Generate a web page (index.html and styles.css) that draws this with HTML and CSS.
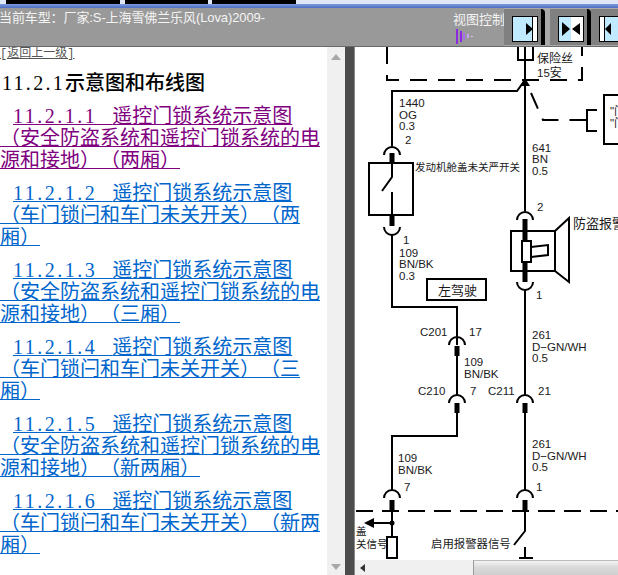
FILE: index.html
```html
<!DOCTYPE html>
<html lang="zh-CN">
<head>
  <meta charset="UTF-8">
  <title>遥控门锁系统示意图</title>
  <link rel="stylesheet" href="styles.css">
</head>
<body>
  <div class="strip">
    <span class="tab tab-a"></span>
    <span class="tab tab-b"></span>
    <span class="tab tab-c"></span>
  </div>
  <div class="titlebar"></div>

  <header class="toolbar">
    <div class="car">当前车型：厂家:S-上海雪佛兰乐风(Lova)2009-</div>
    <div class="view">
      <div class="view-label">视图控制</div>
      <svg class="view-icon" width="18" height="15" viewBox="0 0 18 15">
        <rect x="0" y="0" width="2" height="15" fill="#8a2be2"/>
        <rect x="4" y="2" width="2" height="11" fill="#8a2be2"/>
        <rect x="7" y="4" width="2" height="7" fill="#a66bf0"/>
        <rect x="11" y="5" width="2" height="4" fill="#c4a0f5"/>
        <rect x="15" y="7" width="2" height="1" fill="#d8c4f8"/>
      </svg>
    </div>
    <div class="btn">
      <div class="btn-face">
        <svg width="24" height="24" viewBox="0 0 24 24">
          <rect width="24" height="24" fill="#bfeaff"/>
          <rect x="20" width="4" height="24" fill="#fff"/>
          <path d="M13 6 L20 12 L13 18 Z" fill="#000"/>
          <rect x="19" width="1" height="24" fill="#000"/>
        </svg>
      </div>
    </div>
    <div class="btn">
      <div class="btn-face">
        <svg width="24" height="24" viewBox="0 0 24 24">
          <rect width="12" height="24" fill="#bfeaff"/>
          <rect x="12" width="12" height="24" fill="#fff"/>
          <path d="M3 5 L11 12 L3 19 Z" fill="#000"/>
          <path d="M21 6 L13 12 L21 18 Z" fill="#000"/>
        </svg>
      </div>
    </div>
    <div class="btn btn-last">
      <div class="btn-face">
        <svg width="24" height="24" viewBox="0 0 24 24">
          <rect width="24" height="24" fill="#bfeaff"/>
          <rect width="4" height="24" fill="#fff"/>
          <rect x="4" width="1" height="24" fill="#000"/>
          <path d="M11 6 L5 12 L11 18 Z" fill="#000"/>
        </svg>
      </div>
    </div>
  </header>

  <div class="panes">
    <nav class="tree">
      <a class="back" href="#">[返回上一级]</a>
      <h1 class="tree-title"><span class="num">11.2.1</span>示意图和布线图</h1>
      <p class="item"><a class="seen" href="#"><span class="num">11.2.1.1&nbsp;&nbsp;</span>遥控门锁系统示意图（安全防盗系统和遥控门锁系统的电源和接地）（两厢）</a></p>
      <p class="item"><a href="#"><span class="num">11.2.1.2&nbsp;&nbsp;</span>遥控门锁系统示意图（车门锁闩和车门未关开关）（两厢）</a></p>
      <p class="item"><a href="#"><span class="num">11.2.1.3&nbsp;&nbsp;</span>遥控门锁系统示意图（安全防盗系统和遥控门锁系统的电源和接地）（三厢）</a></p>
      <p class="item"><a href="#"><span class="num">11.2.1.4&nbsp;&nbsp;</span>遥控门锁系统示意图（车门锁闩和车门未关开关）（三厢）</a></p>
      <p class="item"><a href="#"><span class="num">11.2.1.5&nbsp;&nbsp;</span>遥控门锁系统示意图（安全防盗系统和遥控门锁系统的电源和接地）（新两厢）</a></p>
      <p class="item"><a href="#"><span class="num">11.2.1.6&nbsp;&nbsp;</span>遥控门锁系统示意图（车门锁闩和车门未关开关）（新两厢）</a></p>
    </nav>

    <div class="vscroll">
      <svg width="12" height="8" viewBox="0 0 12 8"><path d="M6 1 L11 7 L1 7 Z" fill="#a8a8a8"/></svg>
      <svg width="12" height="8" viewBox="0 0 12 8"><path d="M1 1 L11 1 L6 7 Z" fill="#a8a8a8"/></svg>
    </div>
    <div class="divider"></div>

    <div class="viewer">
      <svg class="diagram" width="263" height="513" viewBox="355 47 263 513">
        <!-- fuse and dashed box -->
        <path class="wire" d="M518 47 V60 H533 V47"/>
        <path class="dash" d="M387 47 V80 H582 V47"/>
        <text class="cn" x="537" y="63" font-size="12">保险丝</text>
        <text class="lb" x="537" y="77">15<tspan class="cn" font-size="12">安</tspan></text>

        <!-- main feed -->
        <path class="wire" d="M525 47 V211"/>
        <path d="M525 78 L530 86 L520 86 Z" fill="#000"/>
        <path class="wire" d="M525 80 L517 91 H392 V146"/>
        <text class="lb" x="399" y="107">1440</text>
        <text class="lb" x="399" y="119">OG</text>
        <text class="lb" x="399" y="130">0.3</text>
        <text class="lb" x="405" y="144">2</text>
        <text class="lb" x="532" y="152">641</text>
        <text class="lb" x="532" y="163">BN</text>
        <text class="lb" x="532" y="175">0.5</text>
        <text class="lb" x="537" y="211">2</text>

        <!-- dashed control line -->
        <path class="dash" d="M531 93 L543 120 H586"/>
        <path class="wire" d="M597 110 H587 V131 H597"/>
        <rect class="wire" x="604" y="95" width="30" height="49"/>
        <text class="lb" x="610" y="115">"门</text>
        <text class="lb" x="610" y="127">"门</text>

        <!-- hood switch -->
        <path class="wire" d="M384 155 a8 8 0 0 1 16 0"/>
        <path class="stem" d="M392 153 V163"/>
        <rect class="wire" x="369" y="163" width="44" height="52"/>
        <path class="wire" d="M392 163 V177 L382 191"/>
        <path class="wire" d="M392 192 V215"/>
        <path class="stem" d="M392 215 V226"/>
        <path class="wire" d="M384 227 a8 8 0 0 0 16 0"/>
        <text class="cn" x="415" y="171" font-size="10.5">发动机舱盖未关严开关</text>
        <text class="lb" x="403" y="244">1</text>
        <path class="wire" d="M392 235 V307 H457 V345"/>
        <text class="lb" x="399" y="257">109</text>
        <text class="lb" x="399" y="268">BN/BK</text>
        <text class="lb" x="399" y="280">0.3</text>
        <rect class="wire" x="427" y="279" width="59" height="21"/>
        <text class="cn" x="438" y="295" font-size="13">左驾驶</text>

        <!-- C201 / C210 -->
        <path class="wire" d="M449 345 a8 8 0 0 1 16 0"/>
        <path class="stem" d="M457 346 V356"/>
        <text class="lb" x="420" y="336">C201</text>
        <text class="lb" x="469" y="336">17</text>
        <path class="wire" d="M457 356 V395"/>
        <text class="lb" x="464" y="366">109</text>
        <text class="lb" x="464" y="378">BN/BK</text>
        <text class="lb" x="418" y="395">C210</text>
        <text class="lb" x="470" y="395">7</text>
        <path class="wire" d="M449 403 a8 8 0 0 1 16 0"/>
        <path class="stem" d="M457 403 V413"/>
        <path class="wire" d="M457 413 V436 H392 V491"/>
        <text class="lb" x="398" y="462">109</text>
        <text class="lb" x="398" y="474">BN/BK</text>
        <text class="lb" x="404" y="491">7</text>
        <path class="wire" d="M384 498 a8 8 0 0 1 16 0"/>
        <path class="stem" d="M392 500 V511"/>

        <!-- horn -->
        <path class="wire" d="M517 220 a8 8 0 0 1 16 0"/>
        <path class="stem" d="M525 219 V241"/>
        <rect class="wire" x="511" y="231" width="44" height="40"/>
        <path class="wire" d="M555 231 L569 218 V282 L555 271"/>
        <rect class="wire" x="522" y="241" width="9" height="21" fill="#fff"/>
        <path class="wire" d="M531 247 L548 245 V255 L531 257"/>
        <path class="stem" d="M525 262 V282"/>
        <path class="wire" d="M517 282 a8 8 0 0 0 16 0"/>
        <text class="cn" x="573" y="228" font-size="13">防盗报警</text>
        <text class="lb" x="536" y="299">1</text>
        <path class="wire" d="M525 290 V396"/>
        <text class="lb" x="532" y="339">261</text>
        <text class="lb" x="532" y="351">D−GN/WH</text>
        <text class="lb" x="532" y="362">0.5</text>
        <text class="lb" x="488" y="395">C211</text>
        <text class="lb" x="538" y="395">21</text>

        <!-- C211 down to enable signal -->
        <path class="wire" d="M517 403 a8 8 0 0 1 16 0"/>
        <path class="stem" d="M525 403 V413"/>
        <path class="wire" d="M525 413 V491"/>
        <text class="lb" x="532" y="448">261</text>
        <text class="lb" x="532" y="460">D−GN/WH</text>
        <text class="lb" x="532" y="471">0.5</text>
        <text class="lb" x="536" y="491">1</text>
        <path class="wire" d="M517 498 a8 8 0 0 1 16 0"/>
        <path class="stem" d="M525 500 V511"/>

        <!-- module boundary -->
        <path class="dash-long" d="M356 511 H618"/>
        <path class="wire" d="M525 511 V531 L514 545"/>
        <path class="wire" d="M525 547 V558 M519 558 H533"/>
        <text class="cn" x="431" y="548" font-size="11.4">启用报警器信号</text>

        <path class="wire" d="M392 511 V537"/>
        <circle cx="392" cy="523" r="2.5" fill="#000"/>
        <path class="wire" d="M392 523 H372"/>
        <path d="M364 523 L374 518 V528 Z" fill="#000"/>
        <rect class="wire" x="387" y="537" width="10" height="21" fill="#fff"/>
        <text class="cn" x="356" y="535" font-size="10.5">盖</text>
        <text class="cn" x="356" y="548" font-size="10.5">关信号</text>
      </svg>
      <div class="hscroll">
        <div class="hscroll-track">
          <svg width="8" height="10" viewBox="0 0 8 10"><path d="M6 1 V9 L1 5 Z" fill="#333"/></svg>
        </div>
        <div class="hscroll-thumb"></div>
      </div>
    </div>
  </div>
</body>
</html>
```

FILE: styles.css
```css
* { box-sizing: border-box; }
html, body { margin: 0; padding: 0; height: 575px; overflow: hidden; }
body { background: #fff; font-family: "Liberation Sans", "Noto Sans CJK SC", sans-serif; text-spacing-trim: space-all; }

.strip { display: flex; height: 4px; background: #dfe6f6; }
.tab { height: 4px; background: #000; }
.tab-a { width: 114px; margin-left: 6px; }
.tab-b { width: 83px; margin-left: 5px; }
.tab-c { width: 84px; margin-left: 4px; }
.titlebar { height: 4px; background: linear-gradient(#7f9bdc, #4d6fc4); }

.toolbar { display: flex; height: 39px; overflow: hidden; background: #999; border-bottom: 1px solid #6a6a6a; }
.car { flex: none; width: 454px; margin-left: -1px; padding-top: 2px; color: #f4f4f4; font-size: 13px; line-height: 15px; letter-spacing: -0.1px; white-space: nowrap; }
.view { width: 51px; flex: none; }
.view-label { padding-top: 4px; color: #f4f4f4; font-size: 13px; line-height: 15px; white-space: nowrap; }
.view-icon { display: block; margin: 2px 0 0 3px; }

.btn { flex: none; width: 46px; height: 38px; padding: 1px 5px 0 0; background: #a9a9a9; }
.btn-face { height: 36px; padding: 8px 0 0 9px; background: #808080; border-right: 4px solid #000; border-top-right-radius: 4px; }
.btn-face svg { display: block; outline: 1px solid #000; }
.btn-last { margin-left: -5px; }

.panes { display: flex; height: 528px; }

.tree { width: 327px; flex: none; overflow: hidden; background: #fff; }
.back { display: block; height: 15px; color: #555; font-family: "Liberation Mono", "Noto Sans CJK SC", monospace; font-size: 12px; line-height: 15px; text-decoration: underline; }
.tree-title { margin: 9px 0 0 2px; color: #000; font-family: "Noto Sans CJK SC", sans-serif; font-size: 20px; line-height: 22px; font-weight: 500; }
.num { font-family: "Liberation Serif", serif; line-height: 0; letter-spacing: 2.5px; }
.tree-title .num { letter-spacing: 2.3px; }
.item { margin: 0 0 11px; text-indent: 13px; font-family: "Noto Sans CJK SC", sans-serif; font-size: 20px; line-height: 22px; }
.tree-title + .item { margin-top: 11px; }
.item a { color: #0066cc; text-decoration-thickness: 1px; text-underline-offset: 1px; }
.item a.seen { color: #800080; }

.vscroll { width: 18px; flex: none; display: flex; flex-direction: column; justify-content: space-between; align-items: center; padding: 6px 0 4px; background: #f0f0f0; }
.vscroll svg { display: block; }
.divider { width: 10px; flex: none; background: #4d4d4d; border-right: 1px solid #8a8a8a; }

.viewer { flex: 1; min-width: 0; display: flex; flex-direction: column; background: #fff; overflow: hidden; }
.diagram { display: block; flex: none; }
.hscroll { flex: 1; display: flex; background: #f0f0f0; }
.hscroll-track { width: 118px; flex: none; padding: 3px 0 0 4px; }
.hscroll-track svg { display: block; }
.hscroll-thumb { flex: 1; background: linear-gradient(#f4f4f4, #dadada 45%, #cfcfcf); border-left: 1px solid #9a9a9a; border-top: 1px solid #bbb; }

.wire { fill: none; stroke: #000; stroke-width: 2; }
.stem { fill: none; stroke: #000; stroke-width: 5; }
.dash { fill: none; stroke: #000; stroke-width: 2; stroke-dasharray: 17 11; }
.dash-long { fill: none; stroke: #000; stroke-width: 2; stroke-dasharray: 17 9; }
.lb { font-family: "Liberation Sans", sans-serif; font-size: 11.5px; fill: #1a1a1a; }
.cn { font-family: "Noto Sans CJK SC", sans-serif; fill: #1a1a1a; }
```
